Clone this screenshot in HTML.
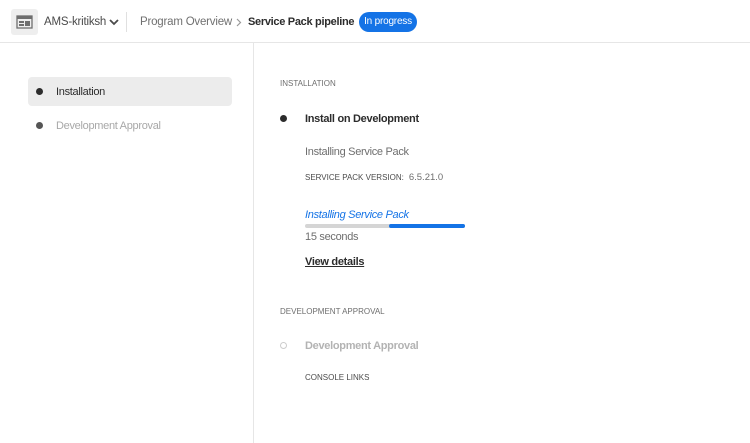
<!DOCTYPE html>
<html><head><meta charset="utf-8"><style>
*{margin:0;padding:0;box-sizing:border-box}
body{width:750px;height:443px;overflow:hidden;background:#fff;font-family:"Liberation Sans",sans-serif;color:#2c2c2c;position:relative}
.hdr{position:absolute;left:0;top:0;width:750px;height:43px;border-bottom:1px solid #e6e6e6;background:#fff}
.logo{position:absolute;left:11px;top:9px;width:27px;height:26px;background:#eee;border-radius:3px}
.abs{position:absolute;white-space:nowrap}
.side{position:absolute;left:253px;top:43px;width:1px;height:400px;background:#e6e6e6}
.sel{position:absolute;left:28px;top:77px;width:204px;height:29px;background:#ececec;border-radius:4px}
.dot{position:absolute;width:7px;height:7px;border-radius:50%;background:#2c2c2c}
.t{font-size:11px;letter-spacing:-0.3px}
</style></head><body>
<div class="hdr">
<div class="logo"><svg width="27" height="26" viewBox="0 0 27 26"><rect x="6" y="7" width="15" height="12" fill="none" stroke="#6e6e6e" stroke-width="1.3"/><rect x="6" y="7" width="15" height="3" fill="#6e6e6e"/><rect x="8" y="12" width="5" height="2" fill="#6e6e6e"/><rect x="8" y="15" width="5" height="2" fill="#6e6e6e"/><rect x="14" y="12" width="5" height="5" fill="#6e6e6e"/></svg></div>
<div class="abs" style="left:44px;top:16px;font-size:11.5px;letter-spacing:-0.2px;color:#4b4b4b">AMS-kritiksh</div>
<svg class="abs" style="left:109px;top:18px" width="10" height="8" viewBox="0 0 10 8"><path d="M1 2l4 4 4-4" fill="none" stroke="#4b4b4b" stroke-width="1.8"/></svg>
<div class="abs" style="left:126px;top:12px;width:1px;height:20px;background:#e0e0e0"></div>
<div class="abs" style="left:140px;top:16px;font-size:11.5px;letter-spacing:-0.2px;color:#707070">Program Overview</div>
<svg class="abs" style="left:236px;top:18px" width="6" height="9" viewBox="0 0 6 9"><path d="M1 1l3.5 3.5L1 8" fill="none" stroke="#999" stroke-width="1.2"/></svg>
<div class="abs" style="left:248px;top:16px;font-size:11px;letter-spacing:-0.3px;font-weight:bold;color:#2c2c2c">Service Pack pipeline</div>
<div class="abs" style="left:359px;top:12px;width:58px;height:20px;background:#1473e6;border-radius:10px;color:#fff;font-size:10px;letter-spacing:-0.2px;line-height:20px;text-align:center">In progress</div>
</div>
<div class="side"></div>
<div class="sel"></div>
<div class="dot" style="left:36px;top:88px"></div>
<div class="abs t" style="left:56px;top:86px;color:#2c2c2c">Installation</div>
<div class="dot" style="left:36px;top:122px;background:#555"></div>
<div class="abs t" style="left:56px;top:120px;color:#a8a8a8">Development Approval</div>

<div class="abs" style="left:280px;top:79px;font-size:8px;color:#6e6e6e">INSTALLATION</div>
<div class="dot" style="left:280px;top:115px"></div>
<div class="abs t" style="left:305px;top:113px;font-weight:bold;color:#2c2c2c">Install on Development</div>
<div class="abs t" style="left:305px;top:146px;color:#6e6e6e">Installing Service Pack</div>
<div class="abs" style="left:305px;top:172px;font-size:8px;color:#4b4b4b">SERVICE PACK VERSION:<span style="font-size:9.5px;margin-left:5px;color:#6e6e6e">6.5.21.0</span></div>
<div class="abs t" style="left:305px;top:209px;font-style:italic;color:#1473e6">Installing Service Pack</div>
<div class="abs" style="left:305px;top:224px;width:160px;height:4px;background:#d5d5d5;border-radius:2px"><div style="position:absolute;left:84px;top:0;width:76px;height:4px;background:#1473e6;border-radius:2px"></div></div>
<div class="abs t" style="left:305px;top:231px;color:#6e6e6e">15 seconds</div>
<div class="abs t" style="left:305px;top:256px;font-weight:bold;text-decoration:underline;color:#2c2c2c">View details</div>

<div class="abs" style="left:280px;top:307px;font-size:8px;color:#6e6e6e">DEVELOPMENT APPROVAL</div>
<div class="abs" style="left:280px;top:342px;width:7px;height:7px;border-radius:50%;border:1.5px solid #ccc"></div>
<div class="abs t" style="left:305px;top:340px;font-weight:bold;color:#b3b3b3">Development Approval</div>
<div class="abs" style="left:305px;top:373px;font-size:8px;color:#4b4b4b">CONSOLE LINKS</div>
</body></html>
